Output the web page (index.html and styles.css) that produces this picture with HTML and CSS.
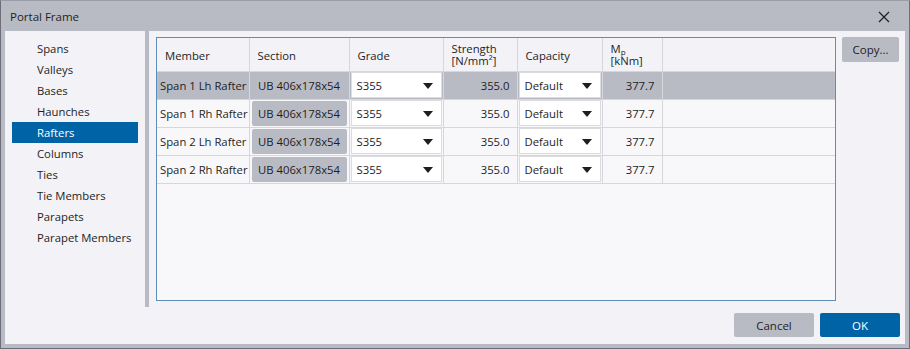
FILE: index.html
```html
<!DOCTYPE html>
<html lang="en">
<head>
  <meta charset="UTF-8" />
  <title>Portal Frame</title>
  <link rel="stylesheet" href="styles.css">
</head>
<body>
  <div class="window">
    <div class="titlebar">
      <span class="title">Portal Frame</span>
      <svg class="close" width="12" height="12" viewBox="0 0 12 12">
        <path d="M1 1L11 11M11 1L1 11" stroke="#1e1e1e" stroke-width="1.2" fill="none"/>
      </svg>
    </div>

    <div class="content">
      <div class="top">
        <ul class="nav">
          <li>Spans</li>
          <li>Valleys</li>
          <li>Bases</li>
          <li>Haunches</li>
          <li class="active">Rafters</li>
          <li>Columns</li>
          <li>Ties</li>
          <li>Tie Members</li>
          <li>Parapets</li>
          <li>Parapet Members</li>
        </ul>
        <div class="splitter"></div>

        <div class="main">
          <div class="grid-box">
            <table class="grid">
              <thead>
                <tr>
                  <th class="c-member">Member</th>
                  <th class="c-section">Section</th>
                  <th class="c-grade">Grade</th>
                  <th class="c-strength two">Strength<br>[N/mm²]</th>
                  <th class="c-capacity">Capacity</th>
                  <th class="c-mp two">M<sub>p</sub><br>[kNm]</th>
                  <th class="c-rest"></th>
                </tr>
              </thead>
              <tbody>
                <tr class="selected">
                  <td class="member">Span 1 Lh Rafter</td>
                  <td class="section"><span class="sec-box">UB 406x178x54</span></td>
                  <td><div class="combo">S355<span class="arrow"></span></div></td>
                  <td class="num">355.0</td>
                  <td><div class="combo">Default<span class="arrow"></span></div></td>
                  <td class="num">377.7</td>
                  <td></td>
                </tr>
                <tr>
                  <td class="member">Span 1 Rh Rafter</td>
                  <td class="section"><span class="sec-box">UB 406x178x54</span></td>
                  <td><div class="combo">S355<span class="arrow"></span></div></td>
                  <td class="num">355.0</td>
                  <td><div class="combo">Default<span class="arrow"></span></div></td>
                  <td class="num">377.7</td>
                  <td></td>
                </tr>
                <tr>
                  <td class="member">Span 2 Lh Rafter</td>
                  <td class="section"><span class="sec-box">UB 406x178x54</span></td>
                  <td><div class="combo">S355<span class="arrow"></span></div></td>
                  <td class="num">355.0</td>
                  <td><div class="combo">Default<span class="arrow"></span></div></td>
                  <td class="num">377.7</td>
                  <td></td>
                </tr>
                <tr>
                  <td class="member">Span 2 Rh Rafter</td>
                  <td class="section"><span class="sec-box">UB 406x178x54</span></td>
                  <td><div class="combo">S355<span class="arrow"></span></div></td>
                  <td class="num">355.0</td>
                  <td><div class="combo">Default<span class="arrow"></span></div></td>
                  <td class="num">377.7</td>
                  <td></td>
                </tr>
              </tbody>
            </table>
          </div>
          <button class="btn copy">Copy...</button>
        </div>
      </div>

      <div class="footer">
        <button class="btn cancel">Cancel</button>
        <button class="btn ok">OK</button>
      </div>
    </div>
  </div>
</body>
</html>
```

FILE: styles.css
```css
* {
  box-sizing: border-box;
}

body {
  margin: 0;
  font-family: 'Open Sans', sans-serif;
  font-size: 11.3px;
  color: #1e1e1e;
  background: #b9bbc4;
}

.window {
  width: 910px;
  height: 349px;
  background: #b9bbc4;
  border: 1px solid #6d6e79;
  border-top-color: #9a9ca6;
  display: flex;
  flex-direction: column;
  padding: 0 4px 4px 4px;
}

.titlebar {
  height: 30px;
  display: flex;
  align-items: center;
  justify-content: space-between;
  padding: 1px 15px 0 5px;
}

.title {
  font-size: 11.5px;
}

.content {
  flex: 1;
  background: #f2f2f7;
  display: flex;
  flex-direction: column;
}

.top {
  display: flex;
  height: 276px;
}

/* left list */
.nav {
  list-style: none;
  margin: 0;
  padding: 7px 7px 0 7px;
  width: 140px;
}

.nav li {
  height: 21px;
  line-height: 21px;
  padding-left: 25px;
  white-space: nowrap;
}

.nav li.active {
  background: #0063a6;
  color: #fff;
}

.splitter {
  width: 4px;
  background: #b9bbc4;
}

.main {
  flex: 1;
  display: flex;
  align-items: flex-start;
  padding: 6px 5px 0 7px;
  gap: 6px;
}

.grid-box {
  width: 680px;
  height: 264px;
  border: 1px solid #5e8dba;
  background: #f8f8fb;
}

.grid {
  width: 100%;
  border-collapse: collapse;
  table-layout: fixed;
}

.grid th {
  height: 33px;
  background: #f2f2f7;
  font-weight: normal;
  text-align: left;
  padding: 2px 0 0 8px;
  border-right: 1px solid #d6d7dd;
  border-bottom: 1px solid #d6d7dd;
  white-space: nowrap;
}

.grid th.two {
  line-height: 12px;
  padding-top: 1px;
}

.grid th sub {
  font-size: 8px;
  vertical-align: -2px;
  line-height: 0;
}

.grid th.c-rest {
  border-right: none;
}

.c-member { width: 92px; }
.c-section { width: 100px; }
.c-grade { width: 94px; }
.c-strength { width: 74px; }
.c-capacity { width: 85px; }
.c-mp { width: 60px; }

.grid td {
  height: 28px;
  padding: 1px 0 0 0;
  border-right: 1px solid #d6d7dd;
  border-bottom: 1px solid #d6d7dd;
  white-space: nowrap;
}

.grid td:last-child {
  border-right: none;
}

.grid td.member {
  padding-left: 3px;
}

.grid td.section {
  padding: 1px 2px;
  text-align: center;
}

.sec-box {
  display: block;
  height: 25px;
  line-height: 26px;
  background: #b9bbc4;
  border-radius: 2px;
}

.grid td.num {
  text-align: right;
  padding-right: 7px;
}

.grid tr.selected td {
  background: #b9bbc4;
}

.grid td .combo {
  margin-top: -1px;
}

.combo {
  position: relative;
  height: 26px;
  line-height: 25px;
  margin: 0 1px;
  padding-left: 5px;
  background: #fff;
  border: 1px solid #dcdcdf;
}

.arrow {
  position: absolute;
  right: 8px;
  top: 10px;
  width: 0;
  height: 0;
  border-left: 5px solid transparent;
  border-right: 5px solid transparent;
  border-top: 6px solid #1e1e1e;
}

.btn {
  font-family: 'Open Sans', sans-serif;
  font-size: 11.5px;
  color: #1e1e1e;
  background: #b9bbc4;
  border: none;
  border-radius: 2px;
  cursor: pointer;
}

.copy {
  width: 57px;
  height: 25px;
}

.footer {
  flex: 1;
  display: flex;
  justify-content: flex-end;
  gap: 6px;
  padding: 6px 5px 0 0;
}

.cancel, .ok {
  width: 80px;
  height: 24px;
}

.ok {
  background: #0063a6;
  color: #fff;
}
```
